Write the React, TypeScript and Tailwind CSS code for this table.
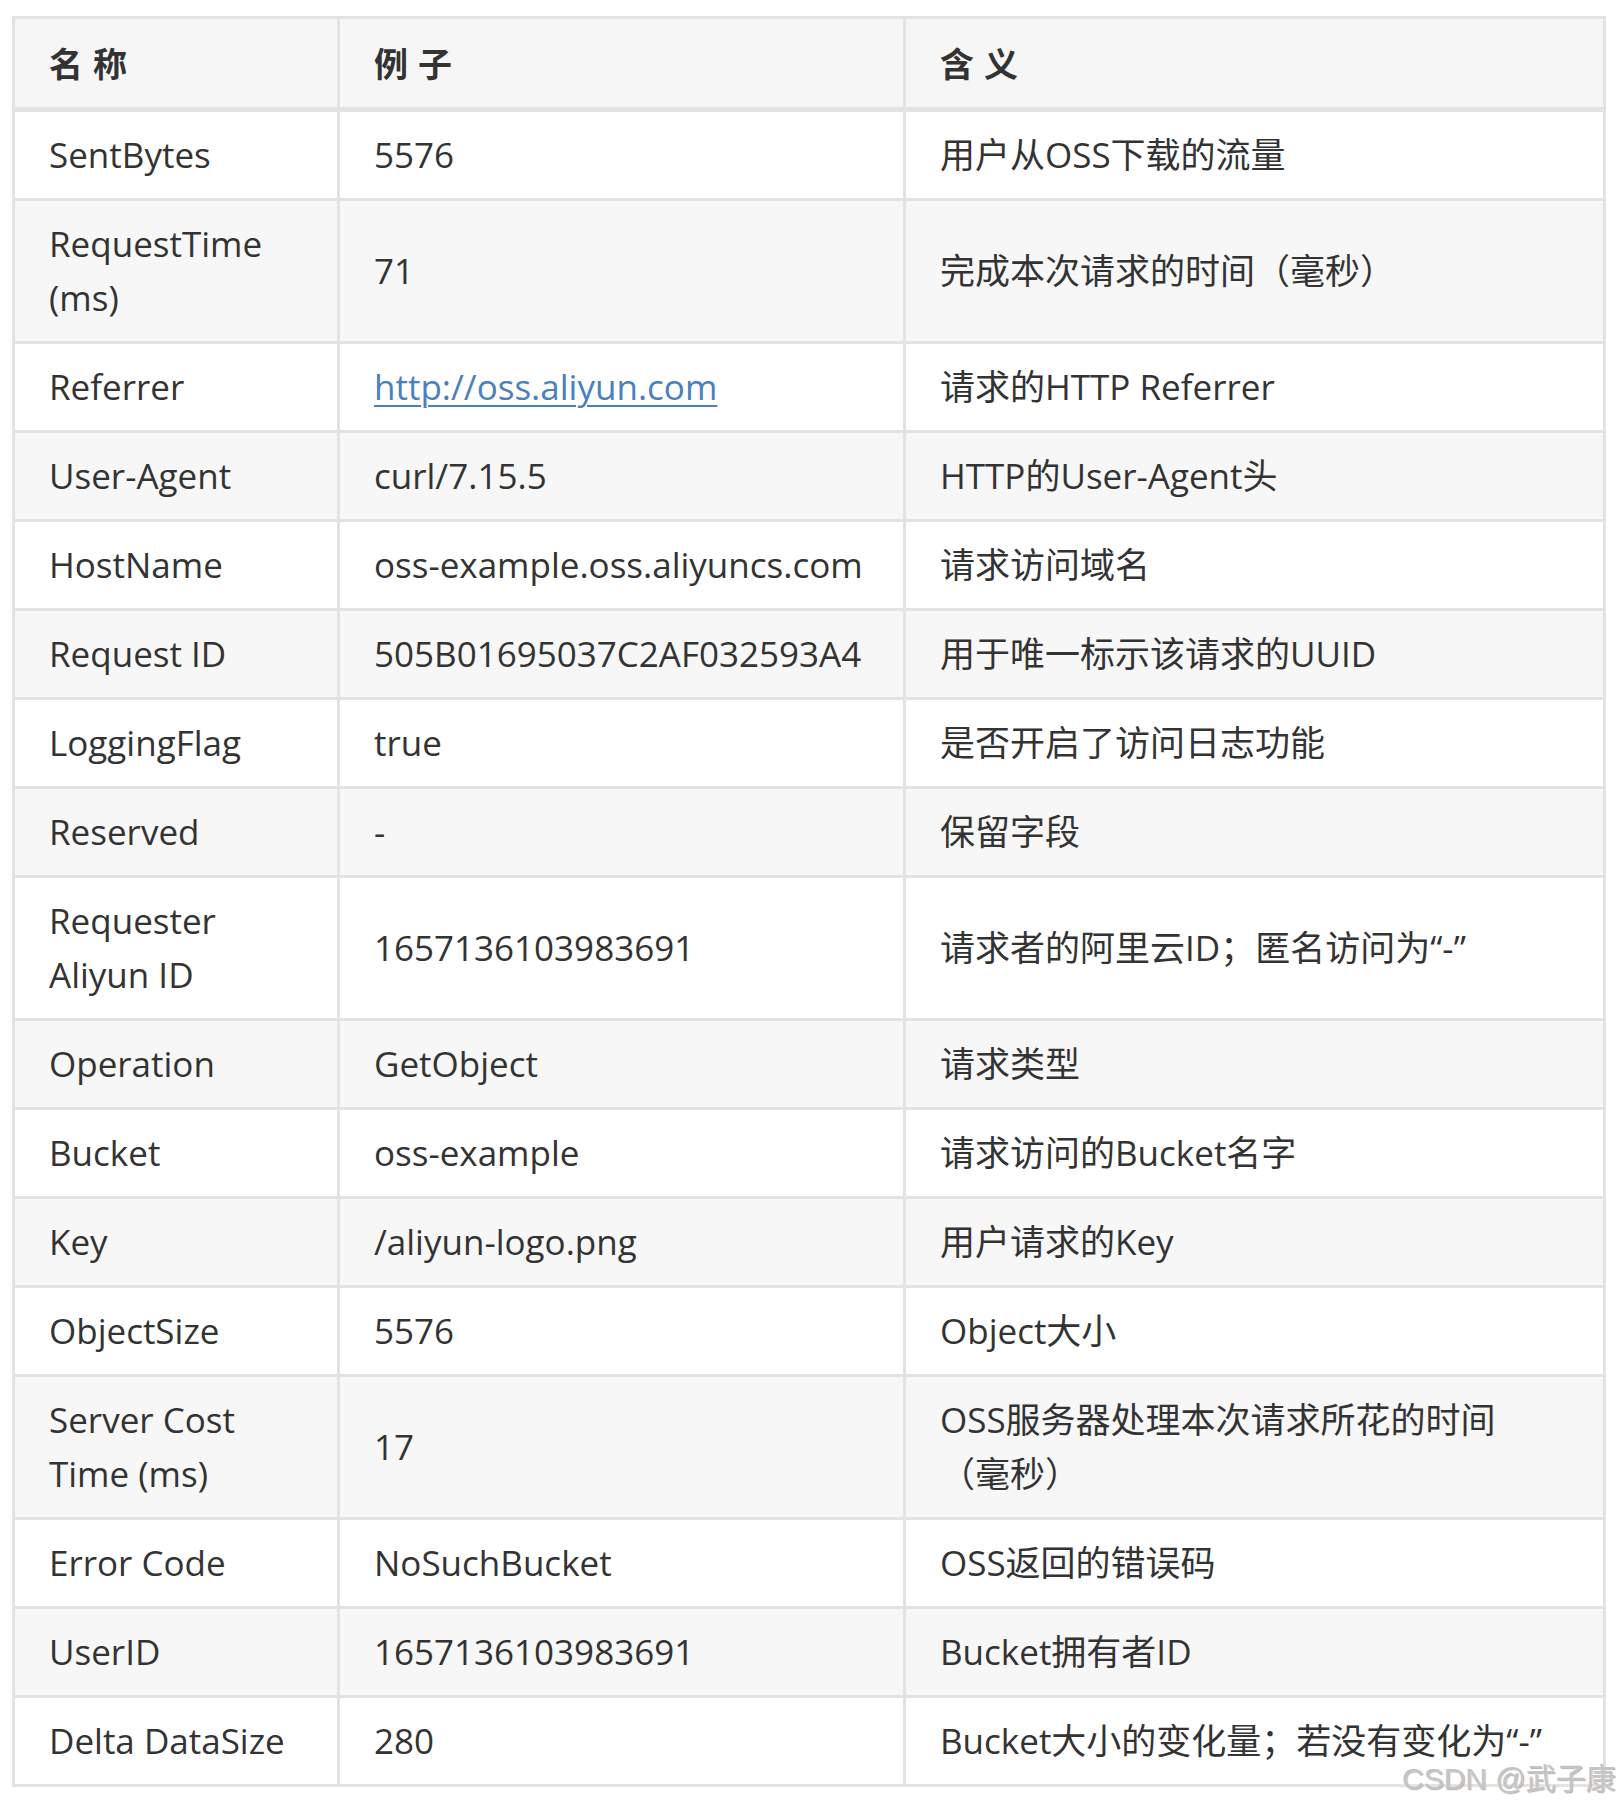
import React from 'react';

interface Row {
  name: string[];
  example: string;
  meaning: string[];
  link?: boolean;
}

const rows: Row[] = [
  { name: ['SentBytes'], example: '5576', meaning: ['用户从OSS下载的流量'] },
  { name: ['RequestTime', '(ms)'], example: '71', meaning: ['完成本次请求的时间（毫秒）'] },
  { name: ['Referrer'], example: 'http://oss.aliyun.com', meaning: ['请求的HTTP Referrer'], link: true },
  { name: ['User-Agent'], example: 'curl/7.15.5', meaning: ['HTTP的User-Agent头'] },
  { name: ['HostName'], example: 'oss-example.oss.aliyuncs.com', meaning: ['请求访问域名'] },
  { name: ['Request ID'], example: '505B01695037C2AF032593A4', meaning: ['用于唯一标示该请求的UUID'] },
  { name: ['LoggingFlag'], example: 'true', meaning: ['是否开启了访问日志功能'] },
  { name: ['Reserved'], example: '-', meaning: ['保留字段'] },
  { name: ['Requester', 'Aliyun ID'], example: '1657136103983691', meaning: ['请求者的阿里云ID；匿名访问为“-”'] },
  { name: ['Operation'], example: 'GetObject', meaning: ['请求类型'] },
  { name: ['Bucket'], example: 'oss-example', meaning: ['请求访问的Bucket名字'] },
  { name: ['Key'], example: '/aliyun-logo.png', meaning: ['用户请求的Key'] },
  { name: ['ObjectSize'], example: '5576', meaning: ['Object大小'] },
  { name: ['Server Cost', 'Time (ms)'], example: '17', meaning: ['OSS服务器处理本次请求所花的时间', '（毫秒）'] },
  { name: ['Error Code'], example: 'NoSuchBucket', meaning: ['OSS返回的错误码'] },
  { name: ['UserID'], example: '1657136103983691', meaning: ['Bucket拥有者ID'] },
  { name: ['Delta DataSize'], example: '280', meaning: ['Bucket大小的变化量；若没有变化为“-”'] },
];

const Lines: React.FC<{ lines: string[] }> = ({ lines }) => (
  <>
    {lines.map((l, i) => (
      <React.Fragment key={i}>
        {i > 0 && <br />}
        {l}
      </React.Fragment>
    ))}
  </>
);

const cell = 'border-[3px] border-[#e3e3e3] px-[34px] align-middle whitespace-nowrap';

export default function App() {
  return (
    <div className="relative w-[1618px] h-[1806px] bg-white pl-3 pt-4 font-['Open_Sans','Noto_Sans_CJK_SC',sans-serif] text-[#333] text-[35px] leading-[54px]">
      <table className="w-[1591px] table-fixed border-collapse">
        <colgroup>
          <col className="w-[325px]" />
          <col className="w-[566px]" />
          <col className="w-[700px]" />
        </colgroup>
        <thead>
          <tr className="bg-[#f6f6f6]">
            {['名称', '例子', '含义'].map((h) => (
              <th
                key={h}
                className={`${cell} py-[17px] border-b-[5px] text-left font-bold text-[34px] tracking-[10px] font-['Noto_Sans_CJK_SC',sans-serif]`}
              >
                {h}
              </th>
            ))}
          </tr>
        </thead>
        <tbody>
          {rows.map((r, i) => (
            <tr key={i} className={i % 2 === 0 ? 'bg-white' : 'bg-[#f7f7f7]'}>
              <td className={`${cell} py-4`}>
                <Lines lines={r.name} />
              </td>
              <td className={`${cell} py-4`}>
                {r.link ? (
                  <a href="#" className="text-[#4a80c2] underline underline-offset-[5px] decoration-2">
                    {r.example}
                  </a>
                ) : (
                  r.example
                )}
              </td>
              <td className={`${cell} py-4`}>
                <Lines lines={r.meaning} />
              </td>
            </tr>
          ))}
        </tbody>
      </table>
      <div className="absolute left-[1402px] top-[1760px] text-[30px] leading-[38px] font-['Liberation_Sans','Noto_Sans_CJK_SC',sans-serif] text-[#c4c4c4] [text-shadow:0_0_2px_#fff,1px_1px_1px_#999] whitespace-nowrap">
        CSDN @武子康
      </div>
    </div>
  );
}
